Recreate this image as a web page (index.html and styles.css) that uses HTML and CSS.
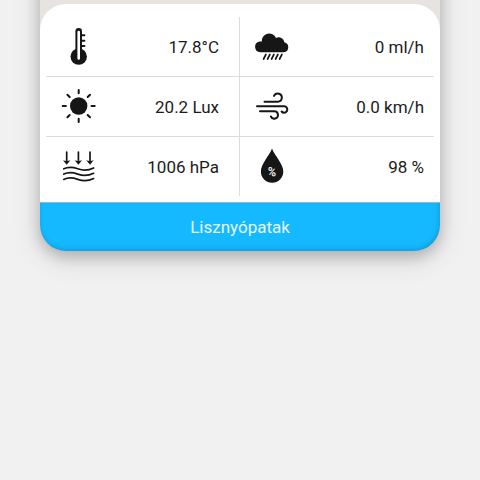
FILE: index.html
```html
<!DOCTYPE html>
<html lang="hu">
<head>
<meta charset="utf-8">
<meta name="viewport" content="width=device-width, initial-scale=1">
<title>Lisznyópatak</title>
<link rel="stylesheet" href="styles.css">
</head>
<body>
<main class="card">
  <div class="cover"></div>
  <section class="panel">
    <ul class="readings">
      <li class="reading">
        <svg class="icon" viewBox="0 0 40 39" aria-hidden="true">
          <path class="line" stroke-width="1.6" d="M23 8.3h3.400M23 13.700h3.400M23 19h3.400"/>
          <rect x="17.400" y="1" width="6.600" height="30" rx="3.300"/>
          <circle cx="20.700" cy="29.600" r="8.200"/>
          <path class="tube" d="M20.700 5v26.400"/>
        </svg>
        <span>17.8°C</span>
      </li>
      <li class="reading">
        <svg class="icon" viewBox="0 0 40 39" aria-hidden="true">
          <path d="M8.300 25.300a5.400 5.400 0 0 1-.8-10.700q1-.3 2.300-.1A7.400 7.400 0 0 1 24 11.100a5.500 5.500 0 0 1 8.300 4.200 5.100 5.100 0 0 1-.3 10z"/>
          <path class="line thin" d="M13.900 27.400l-2.300 4.600M17.900 27.400l-2.300 4.600M21.900 27.400l-2.300 4.600M25.900 27.400l-2.300 4.600M29.900 27.400l-2.300 4.600"/>
        </svg>
        <span>0 ml/h</span>
      </li>
      <li class="reading">
        <svg class="icon" viewBox="0 0 40 39" aria-hidden="true">
          <circle cx="20.700" cy="19" r="8.700"/>
          <path class="line" d="M20.700 3v3.200M20.700 31.800V35M4.700 19h3.200M33.500 19h3.200M9.400 7.700l2.300 2.300M29.700 28l2.300 2.300M9.400 30.300l2.300-2.300M29.700 10L32 7.700"/>
        </svg>
        <span>20.2 Lux</span>
      </li>
      <li class="reading">
        <svg class="icon" viewBox="0 0 40 39" aria-hidden="true">
          <path class="line" d="M12.500 14.700h13.200a4.100 4.100 0 1 0-3.700-5.800M5 19.300h27.200a3.200 3.200 0 1 1-2.600 5.200M8 24.300h14.300a3.700 3.700 0 1 1-3.400 5.200"/>
        </svg>
        <span>0.0 km/h</span>
      </li>
      <li class="reading">
        <svg class="icon" viewBox="0 0 40 39" aria-hidden="true">
          <path class="line thin" d="M8.700 5v10M20.400 5v10M32 5v10"/>
          <path d="M5 13.300l3.700 1 3.700-1-3.700 4.500zM16.700 13.300l3.700 1 3.700-1-3.700 4.500zM28.300 13.300l3.700 1 3.700-1-3.700 4.500z"/>
          <path class="line thin" d="M5.800 21.800c5-2.400 9-1.800 14 0s10 2 15.800-.8M5.800 27.100c5-2.400 9-1.800 14 0s10 2 15.800-.8M5.800 32.400c5-2.400 9-1.800 14 0s10 2 15.800-.8"/>
        </svg>
        <span>1006 hPa</span>
      </li>
      <li class="reading">
        <svg class="icon" viewBox="0 0 40 39" aria-hidden="true">
          <path d="M20 1.600C22.500 8.500 31.300 17 31.300 24.600a11.200 11.200 0 0 1-22.400 0C8.900 17 17.500 8.500 20 1.600z"/>
          <text class="percent" x="20" y="29" transform="rotate(8 20 25)">%</text>
        </svg>
        <span>98 %</span>
      </li>
    </ul>
  </section>
  <footer class="place">Lisznyópatak</footer>
</main>
</body>
</html>
```
FILE: styles.css
```css
html {
  background: #f1f1f1;
}

body {
  display: flow-root;
  min-height: 100vh;
  margin: 0;
  color: #1c1c1c;
  font: 17px/24px Roboto, "Liberation Sans", sans-serif;
}

.card {
  margin: -60px 40px 0;
  border-radius: 26px;
  background: #e7e3df;
  box-shadow: 0 5px 15px rgba(0, 0, 0, 0.22), 0 8px 30px rgba(0, 0, 0, 0.12);
}

.cover {
  height: 64px;
}

.panel {
  padding: 13px 6px 6px;
  border-radius: 26px 26px 0 0;
  background: #fff;
}

.readings {
  display: grid;
  grid-template-columns: 1fr 1fr;
  margin: 0;
  padding: 0;
  list-style: none;
}

.reading {
  display: flex;
  align-items: center;
  justify-content: space-between;
  min-height: 59px;
  padding: 0 10px 0 12px;
  border-bottom: 1px solid #dcdcdc;
}

.reading:nth-child(odd) {
  padding-right: 20px;
  border-right: 1px solid #dcdcdc;
}

.reading:nth-last-child(-n + 2) {
  border-bottom: 0;
}

.icon {
  width: 40px;
  height: 39px;
  fill: #161616;
}

.line {
  fill: none;
  stroke: #161616;
  stroke-width: 2;
  stroke-linecap: round;
}

.thin {
  stroke-width: 1.7;
}

.tube {
  fill: none;
  stroke: #fff;
  stroke-width: 2.6;
  stroke-linecap: round;
}

.percent {
  fill: #fff;
  font-size: 12px;
  font-weight: 500;
  text-anchor: middle;
}

.place {
  padding: 12px;
  border-top: 1px solid #7fc4e4;
  border-radius: 0 0 26px 26px;
  background: #14b9ff;
  box-shadow: inset -1px -2px 4px rgba(40, 110, 150, 0.4);
  color: #e8f8ff;
  text-align: center;
}
```
